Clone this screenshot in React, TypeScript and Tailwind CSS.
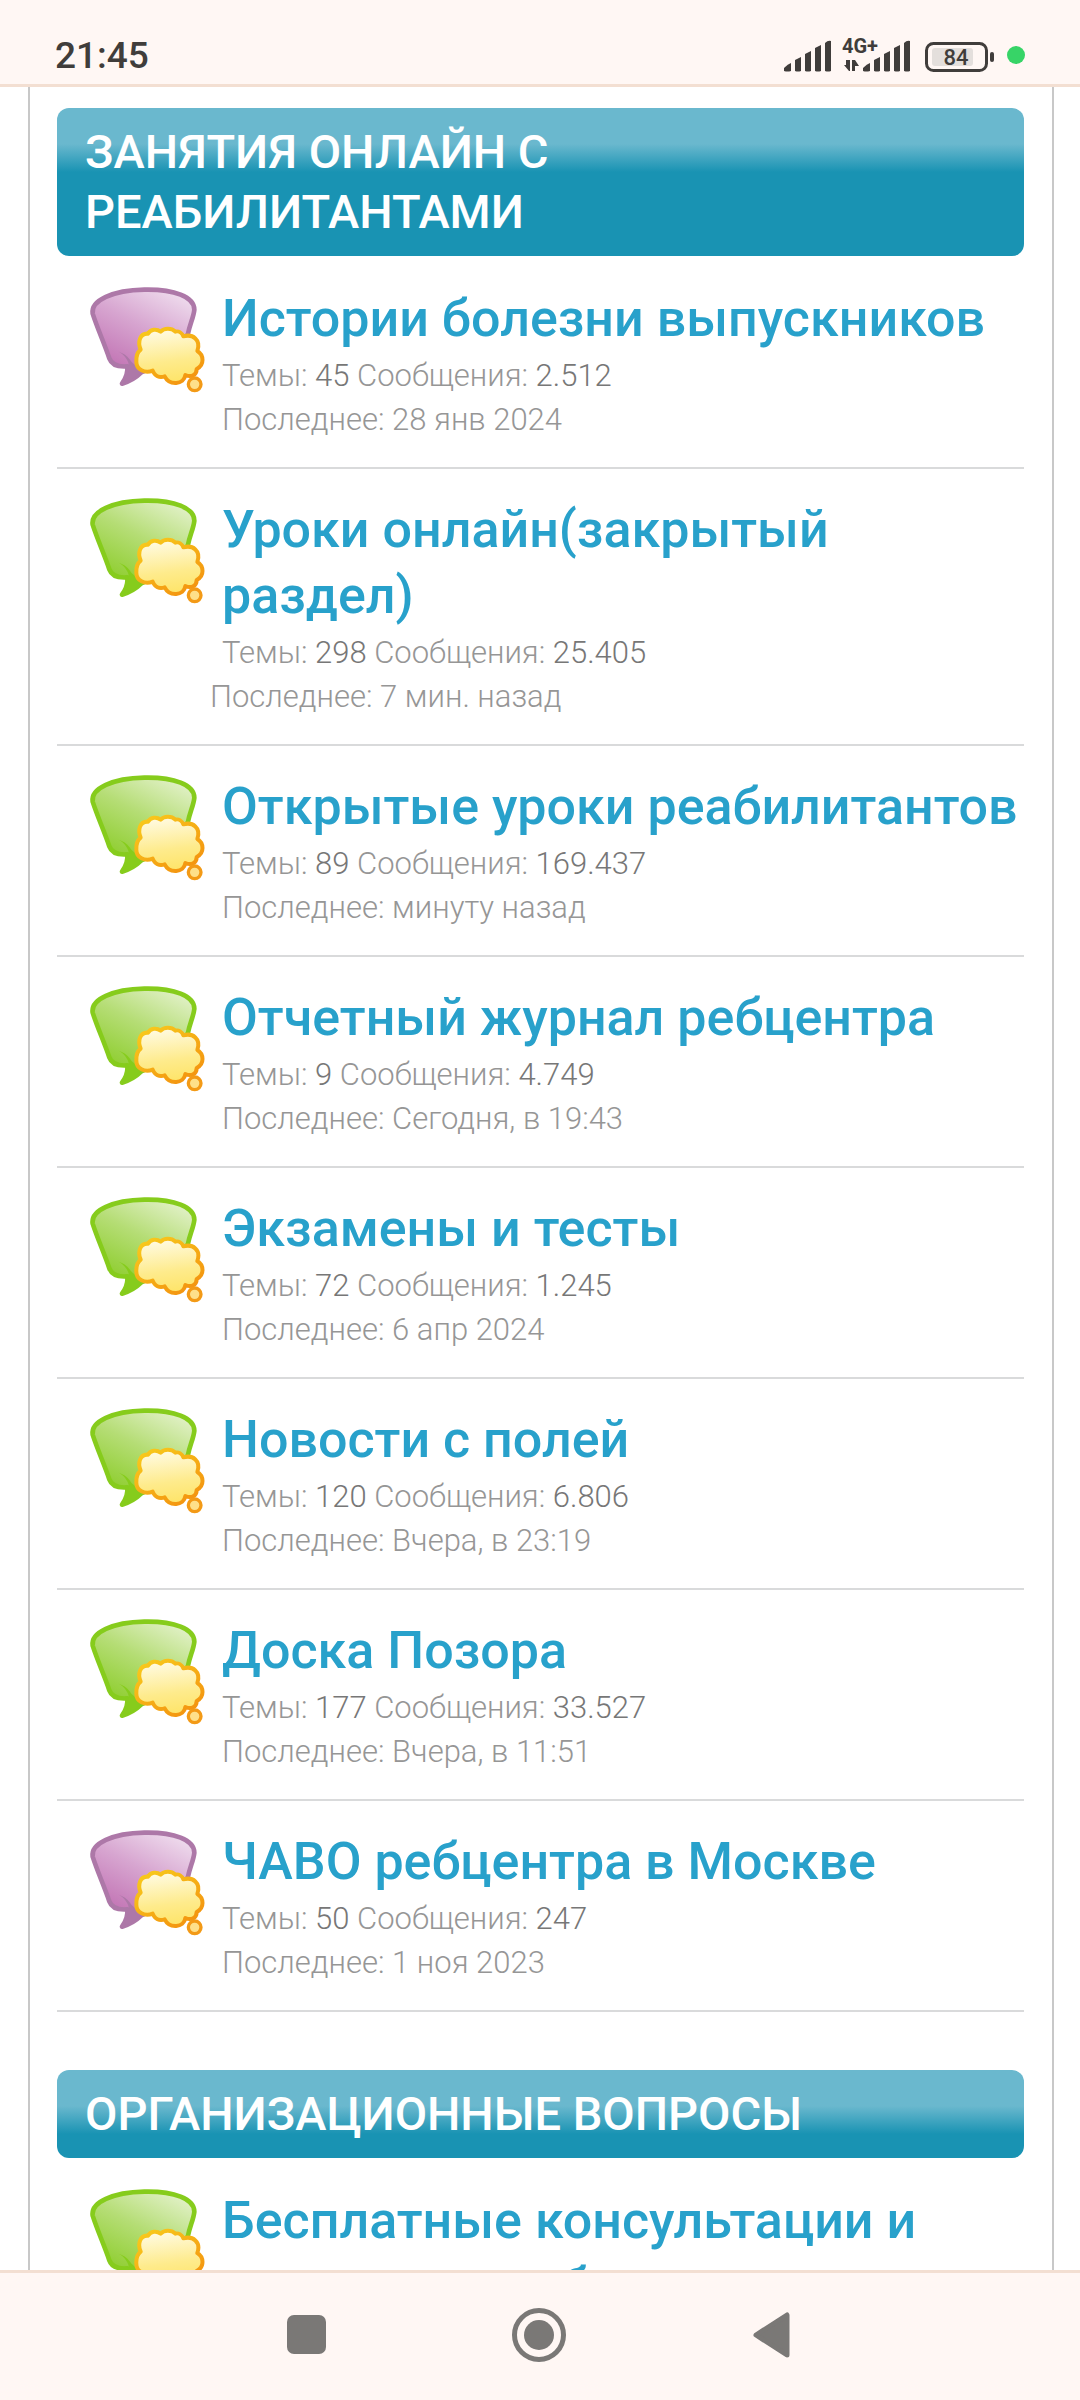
import React from "react";

type BubbleTone = "purple" | "green";

interface Forum {
  title: string;
  href: string;
  tone: BubbleTone;
  topics?: string;
  posts?: string;
  last?: string;
  outdent?: boolean;
}

interface Category {
  name: string;
  forums: Forum[];
}

const categories: Category[] = [
  {
    name: "Занятия онлайн с реабилитантами",
    forums: [
      { title: "Истории болезни выпускников", href: "#f1", tone: "purple", topics: "45", posts: "2.512", last: "28 янв 2024" },
      { title: "Уроки онлайн(закрытый раздел)", href: "#f2", tone: "green", topics: "298", posts: "25.405", last: "7 мин. назад", outdent: true },
      { title: "Открытые уроки реабилитантов", href: "#f3", tone: "green", topics: "89", posts: "169.437", last: "минуту назад" },
      { title: "Отчетный журнал ребцентра", href: "#f4", tone: "green", topics: "9", posts: "4.749", last: "Сегодня, в 19:43" },
      { title: "Экзамены и тесты", href: "#f5", tone: "green", topics: "72", posts: "1.245", last: "6 апр 2024" },
      { title: "Новости с полей", href: "#f6", tone: "green", topics: "120", posts: "6.806", last: "Вчера, в 23:19" },
      { title: "Доска Позора", href: "#f7", tone: "green", topics: "177", posts: "33.527", last: "Вчера, в 11:51" },
      { title: "ЧАВО ребцентра в Москве", href: "#f8", tone: "purple", topics: "50", posts: "247", last: "1 ноя 2023" },
    ],
  },
  {
    name: "Организационные вопросы",
    forums: [{ title: "Бесплатные консультации и запись на реабилитацию", href: "#f9", tone: "green" }],
  },
];

const bubbleColors = {
  purple: { light: "#f0dfef", mid: "#d7a5d0", dark: "#c274b4", line: "#ad78a8" },
  green: { light: "#e4f2cc", mid: "#b5dd75", dark: "#8fce30", line: "#86cc1c" },
};

const BubbleIcon = ({ tone }: { tone: BubbleTone }) => {
  const c = bubbleColors[tone];
  const id = React.useId();
  return (
    <svg className="w-[120px] h-[110px] shrink-0" viewBox="26 45 360 330" aria-hidden="true">
      <defs>
        <linearGradient id={`${id}b`} x1="0.85" y1="0" x2="0.35" y2="0.9">
          <stop offset="0" stopColor={c.light} />
          <stop offset="0.5" stopColor={c.mid} />
          <stop offset="1" stopColor={c.dark} />
        </linearGradient>
        <linearGradient id={`${id}c`} x1="0.4" y1="0" x2="0.55" y2="1">
          <stop offset="0" stopColor="#fffbe4" />
          <stop offset="0.6" stopColor="#feeb8c" />
          <stop offset="1" stopColor="#fee468" />
        </linearGradient>
        <linearGradient id={`${id}s`} x1="0.1" y1="0" x2="0.9" y2="1">
          <stop offset="0" stopColor="#f8ca1c" />
          <stop offset="1" stopColor="#f3900f" />
        </linearGradient>
      </defs>
      <path
        d="M40 128 C34 88 100 58 195 56 C285 54 345 78 345 116 C343 138 332 158 326 188 C300 250 240 280 186 304 C168 322 148 332 128 338 C140 322 146 304 144 286 C120 288 98 284 90 262 C72 210 54 172 40 128 Z"
        fill={`url(#${id}b)`}
        stroke={c.line}
        strokeWidth="14"
        strokeLinejoin="round"
      />
      <path d="M118 242 C136 252 148 268 150 288 C150 306 142 324 130 336 C152 330 170 318 186 302 C176 284 158 278 152 266 C142 252 130 246 118 242 Z" fill={c.line} />
      <path
        d="M184 236 C174 213 182 186 206 188 C214 174 232 173 244 182 C254 171 276 170 288 182 C298 179 308 186 312 196 C340 188 366 206 354 240 C374 252 376 282 352 294 C352 312 336 320 318 312 C314 342 270 344 256 316 C240 321 226 315 220 299 C196 308 171 296 171 272 C170 256 174 244 184 236 Z"
        fill={`url(#${id}c)`}
        stroke={`url(#${id}s)`}
        strokeWidth="12"
        strokeLinejoin="round"
      />
      <circle cx="346" cy="340" r="19" fill="#fee08a" stroke="#f39a16" strokeWidth="10" />
    </svg>
  );
};

const SignalBars = () => (
  <svg className="w-[47px] h-8" viewBox="0 0 47 32" fill="#403d3b" aria-hidden="true">
    <path d="M0 31V28Q4 24 7 23V31Q3.500 32 0 31Z" />
    <path d="M11 31V20L17 17V31Q14 32 11 31Z" />
    <path d="M21 31V14L27 11V31Q24 32 21 31Z" />
    <path d="M31 31V8L37 5V31Q34 32 31 31Z" />
    <path d="M41 31V3Q44 0 47 1V31Q44 32 41 31Z" />
  </svg>
);

const NetworkSignal = () => (
  <svg className="w-[69px] h-10 ml-[11px]" viewBox="0 -6 69 40" fill="#403d3b" role="img" aria-label="4G+">
    <text x="0" y="15" className="font-[Roboto] text-[20px] font-bold">4G+</text>
    <path d="M2 27L7 33V22H4V27Z M7 22V33H8V22Z M10 22V33H13V28H17L13 22Z" />
    <path d="M21 33V30Q25 26 28 25V33Q24 34 21 33Z" />
    <path d="M32 33V22L38 19V33Q35 34 32 33Z" />
    <path d="M42 33V16L48 13V33Q45 34 42 33Z" />
    <path d="M52 33V10L58 7V33Q55 34 52 33Z" />
    <path d="M62 33V5Q65 2 68 3V33Q65 34 62 33Z" />
  </svg>
);

const Battery = () => (
  <svg className="w-[70px] h-[30px] ml-[14px]" viewBox="0 0 70 30" role="img" aria-label="84%">
    <rect x="1.500" y="1.500" width="60" height="27" rx="7" fill="none" stroke="#403d3b" strokeWidth="3" />
    <rect x="7" y="6" width="41" height="18" rx="3" fill="#e4dfdc" />
    <rect x="65" y="10" width="4" height="10" rx="2" fill="#403d3b" />
    <text x="31" y="23" textAnchor="middle" fill="#403d3b" className="font-[Roboto] text-[22px] font-medium">84</text>
  </svg>
);

const StatusBar = () => (
  <header className="h-[87px] shrink-0 flex items-end justify-between px-[55px] pb-3 bg-[#fff7f4] border-b-3 border-[#f3dfd2]">
    <span className="text-[37px] leading-8 font-medium text-[#403d3b]">21:45</span>
    <div className="flex items-end">
      <SignalBars />
      <NetworkSignal />
      <Battery />
      <span className="w-[18px] h-[18px] ml-3 mb-2 rounded-full bg-[#37d467]" />
    </div>
  </header>
);

const ForumRow = ({ forum }: { forum: Forum }) => (
  <li className="flex gap-[14px] pt-7 pb-[25px] pl-[31px] border-b-2 border-[#d9dadb]">
    <BubbleIcon tone={forum.tone} />
    <div className="min-w-0 flex-1">
      <h3 className="mb-[2px] text-[52px] leading-[66px] font-medium">
        <a href={forum.href} className="text-[#28a1cb]">{forum.title}</a>
      </h3>
      {forum.topics && (
        <p className="text-[31px] leading-[44px] font-light text-[#969696]">
          Темы: <span className="text-[#777777]">{forum.topics}</span> Сообщения: <span className="text-[#777777]">{forum.posts}</span>
        </p>
      )}
      {forum.last && (
        <p className={`text-[31px] leading-[44px] font-light text-[#969696] ${forum.outdent ? "-ml-3" : ""}`}>
          Последнее: {forum.last}
        </p>
      )}
    </div>
  </li>
);

const NavBar = () => (
  <nav className="h-[130px] shrink-0 flex items-center justify-center gap-[177px] pb-1 pr-[2px] bg-[#fff7f4] border-t-3 border-[#f3dfd2]">
    <button type="button" aria-label="Недавние" className="w-14 h-14 flex items-center justify-center">
      <span className="w-[39px] h-[39px] rounded-[7px] bg-[#7a7876]" />
    </button>
    <button type="button" aria-label="Домой" className="w-14 h-14">
      <svg viewBox="0 0 56 56" aria-hidden="true">
        <circle cx="28" cy="28" r="24.500" fill="none" stroke="#7a7876" strokeWidth="5" />
        <circle cx="28" cy="28" r="15" fill="#7a7876" />
      </svg>
    </button>
    <button type="button" aria-label="Назад" className="w-14 h-14">
      <svg viewBox="0 0 56 56" aria-hidden="true">
        <path d="M12 28L43 8V48Z" fill="#7a7876" stroke="#7a7876" strokeWidth="5" strokeLinejoin="round" />
      </svg>
    </button>
  </nav>
);

export default function App() {
  return (
    <div className="h-screen flex flex-col overflow-hidden bg-white font-[Roboto,sans-serif]">
      <StatusBar />
      <main className="flex-1 min-h-0 overflow-hidden ml-7 mr-[26px]">
        <div className="min-h-full pl-[27px] pr-7 pt-[21px] border-x-2 border-[#c8c8c8]">
          {categories.map((category) => (
            <section key={category.name} className="mb-[58px]">
              <h2 className="mb-[2px] px-7 py-[14px] rounded-xl bg-[linear-gradient(to_bottom,#6ab8ce_36px,#1993b3_64px)] text-[47px] leading-[60px] font-medium uppercase text-white">
                {category.name}
              </h2>
              <ul>
                {category.forums.map((forum) => (
                  <ForumRow key={forum.href} forum={forum} />
                ))}
              </ul>
            </section>
          ))}
        </div>
      </main>
      <NavBar />
    </div>
  );
}
